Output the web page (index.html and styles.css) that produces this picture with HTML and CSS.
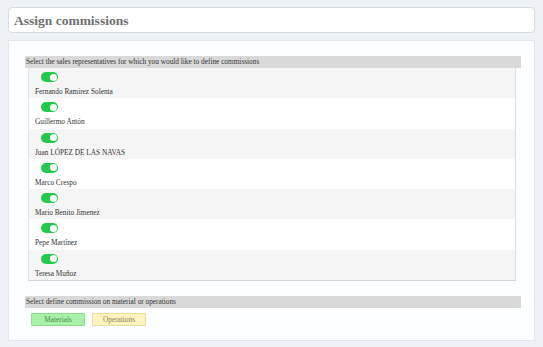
FILE: index.html
```html
<!DOCTYPE html>
<html lang="en">
<head>
<meta charset="utf-8">
<title>Assign commissions</title>
<link rel="stylesheet" href="styles.css">
</head>
<body>
<div class="page">
  <header class="title-box"><h1 class="title">Assign commissions</h1></header>
  <main class="panel">
    <section class="group">
      <div class="bar">Select the sales representatives for which you would like to define commissions</div>
      <ul class="reps">
        <li class="rep"><span class="toggle"></span><span class="name">Fernando Ramirez Solenta</span></li>
        <li class="rep"><span class="toggle"></span><span class="name">Guillermo Antón</span></li>
        <li class="rep"><span class="toggle"></span><span class="name">Juan LÓPEZ DE LAS NAVAS</span></li>
        <li class="rep"><span class="toggle"></span><span class="name">Marco Crespo</span></li>
        <li class="rep"><span class="toggle"></span><span class="name">Mario Benito Jimenez</span></li>
        <li class="rep"><span class="toggle"></span><span class="name">Pepe Martínez</span></li>
        <li class="rep"><span class="toggle"></span><span class="name">Teresa Muñoz</span></li>
      </ul>
    </section>
    <section class="group group-choice">
      <div class="bar">Select define commission on material or operations</div>
      <div class="buttons">
        <button class="btn btn-mat" type="button">Materials</button>
        <button class="btn btn-ops" type="button">Operations</button>
      </div>
    </section>
  </main>
</div>
</body>
</html>
```
FILE: styles.css
```css
html, body {
  margin: 0;
  padding: 0;
}
body {
  background: #eef2f7;
  font-family: "Liberation Serif", "Times New Roman", serif;
  color: #333;
}
.page {
  width: 543px;
  height: 347px;
  box-sizing: border-box;
  padding: 7px 8px 6px 8px;
  display: flex;
  flex-direction: column;
  gap: 7px;
}
.title-box {
  height: 26px;
  box-sizing: border-box;
  background: #ffffff;
  border: 1px solid #d3dbe4;
  border-radius: 4px;
  display: flex;
  align-items: center;
  padding-left: 5px;
  padding-top: 1px;
}
.title {
  margin: 0;
  font-size: 13.5px;
  font-weight: bold;
  color: #707070;
}
.panel {
  height: 301px;
  box-sizing: border-box;
  background: #fdfeff;
  border: 1px solid #dfe6ee;
  padding: 15px 13px 0 16px;
}
.bar {
  height: 12px;
  line-height: 12px;
  background: #d9d9d9;
  font-size: 7.3px;
  color: #333;
  padding-left: 1px;
  white-space: nowrap;
}
.reps {
  list-style: none;
  margin: 0 5px 0 3px;
  padding: 0;
  border-left: 1px solid #e6e6e6;
  border-right: 1px solid #dcdcdc;
  border-bottom: 1px solid #d6d6d6;
}
.rep {
  height: 30.3px;
  box-sizing: border-box;
  padding: 4px 0 0 6px;
  display: flex;
  flex-direction: column;
  align-items: flex-start;
}
.rep:nth-child(odd) {
  background: #f5f5f5;
}
.rep:nth-child(even) {
  background: #ffffff;
}
.toggle {
  position: relative;
  width: 17px;
  height: 10px;
  margin-left: 6px;
  border-radius: 5px;
  background: #22c94c;
}
.toggle::after {
  content: "";
  position: absolute;
  right: 1.5px;
  top: 1.5px;
  width: 7px;
  height: 7px;
  border-radius: 50%;
  background: #ffffff;
}
.name {
  margin-top: 5px;
  font-size: 7.3px;
  line-height: 10px;
  color: #333;
  white-space: nowrap;
}
.group-choice {
  margin-top: 15px;
}
.buttons {
  display: flex;
  gap: 7px;
  padding: 5px 0 0 6px;
}
.btn {
  width: 54px;
  height: 13px;
  box-sizing: border-box;
  padding: 0;
  font-family: "Liberation Serif", "Times New Roman", serif;
  font-size: 7.3px;
  line-height: 11px;
  border-radius: 1px;
}
.btn-mat {
  background: #a8f2a8;
  border: 1px solid #8fdc8f;
  color: #4e8a4e;
}
.btn-ops {
  background: #fdf3c2;
  border: 1px solid #eadb95;
  color: #8d7f52;
}
```
